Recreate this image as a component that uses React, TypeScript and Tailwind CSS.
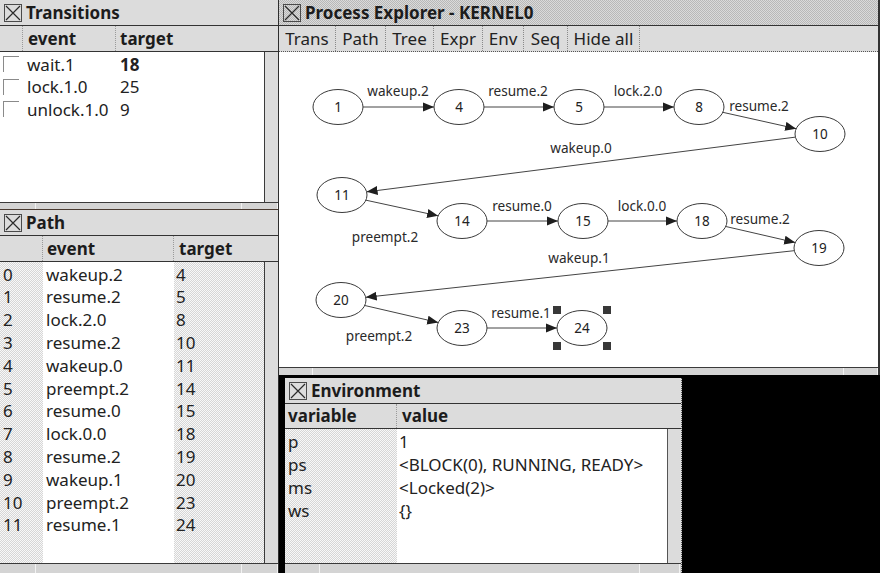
import React from "react";

const stipple =
  "bg-[image:repeating-conic-gradient(#d6d6d6_0_25%,#f8f8f8_0_50%)] bg-[length:2px_2px]";
const stippleDark =
  "bg-[image:repeating-conic-gradient(#b8b8b8_0_25%,#dadada_0_50%)] bg-[length:2px_2px]";

function CloseBox() {
  return (
    <svg width="18" height="18" viewBox="0 0 18 18" className="shrink-0">
      <rect x="0.5" y="0.5" width="17" height="17" fill="none" stroke="#4a4a4a" />
      <path d="M2 2 L16 16 M16 2 L2 16" stroke="#2a2a2a" strokeWidth="1.2" />
    </svg>
  );
}

function TitleBar({ title, dark }: { title: string; dark?: boolean }) {
  return (
    <div
      className={`h-[26px] shrink-0 flex items-center gap-[4px] px-[4px] border-b border-[#333] ${
        dark ? stippleDark : "bg-[#dcdcdc]"
      }`}
    >
      <CloseBox />
      <span className="text-[17px] font-bold text-[#1c1c1c] leading-none">{title}</span>
    </div>
  );
}

function HScroll({ h, cuts }: { h: string; cuts: number[] }) {
  return (
    <div className={`${h} shrink-0 flex border-t border-[#3a3a3a] bg-[#d4d4d4]`}>
      {cuts.map((w, i) => (
        <div key={i} style={{ width: w }} className="h-full border-r border-[#f2f2f2]" />
      ))}
    </div>
  );
}

const transitions = [
  { event: "wait.1", target: "18", bold: true },
  { event: "lock.1.0", target: "25" },
  { event: "unlock.1.0", target: "9" },
];

const path = [
  ["wakeup.2", "4"],
  ["resume.2", "5"],
  ["lock.2.0", "8"],
  ["resume.2", "10"],
  ["wakeup.0", "11"],
  ["preempt.2", "14"],
  ["resume.0", "15"],
  ["lock.0.0", "18"],
  ["resume.2", "19"],
  ["wakeup.1", "20"],
  ["preempt.2", "23"],
  ["resume.1", "24"],
];

const env = [
  ["p", "1"],
  ["ps", "<BLOCK(0), RUNNING, READY>"],
  ["ms", "<Locked(2)>"],
  ["ws", "{}"],
];

function TransitionsPanel() {
  return (
    <div className="h-[210px] shrink-0 flex flex-col border-b border-[#4a3a30]">
      <TitleBar title="Transitions" />
      <div className="h-[26px] shrink-0 flex bg-[#dcdcdc] border-b border-[#333] text-[17px] font-bold text-[#1c1c1c]">
        <div className="w-[23px] border-r border-dotted border-[#9a9a9a]" />
        <div className="w-[93px] pl-[5px] flex items-center border-r border-dotted border-[#9a9a9a]">event</div>
        <div className="flex-1 pl-[4px] flex items-center">target</div>
      </div>
      <div className="flex-1 flex min-h-0">
        <div className="flex-1 bg-white pt-[1px]">
          {transitions.map((t) => (
            <div key={t.event} className="h-[22.5px] flex items-center text-[17px] text-[#222]">
              <div className="w-[23px] pl-[3px]">
                <div className="w-[16px] h-[16px] border-t border-l border-[#8a8a8a]" />
              </div>
              <div className="w-[93px] pl-[4px]">{t.event}</div>
              <div className={`pl-[4px] ${t.bold ? "font-bold" : ""}`}>{t.target}</div>
            </div>
          ))}
        </div>
        <div className="w-[14px] bg-[#dcdcdc] border-l border-[#3a3a3a]" />
      </div>
      <HScroll h="h-[7px]" cuts={[36, 206, 36]} />
    </div>
  );
}

function PathPanel() {
  return (
    <div className="flex-1 flex flex-col min-h-0">
      <TitleBar title="Path" />
      <div className="h-[26px] shrink-0 flex bg-[#dcdcdc] border-b border-[#333] text-[17px] font-bold text-[#1c1c1c]">
        <div className="w-[43px] border-r border-dotted border-[#9a9a9a]" />
        <div className="w-[131px] pl-[4px] flex items-center border-r border-dotted border-[#9a9a9a]">event</div>
        <div className="flex-1 pl-[5px] flex items-center">target</div>
      </div>
      <div className="flex-1 flex min-h-0">
        <div className="flex-1 flex text-[17px] text-[#222]">
          <div className={`w-[43px] ${stipple} pt-[1px]`}>
            {path.map((_, i) => (
              <div key={i} className="h-[22.8px] flex items-center pl-[3px]">{i}</div>
            ))}
          </div>
          <div className="w-[131px] bg-white pt-[1px]">
            {path.map(([e], i) => (
              <div key={i} className="h-[22.8px] flex items-center pl-[3px]">{e}</div>
            ))}
          </div>
          <div className={`flex-1 ${stipple} pt-[1px]`}>
            {path.map(([, t], i) => (
              <div key={i} className="h-[22.8px] flex items-center pl-[2px]">{t}</div>
            ))}
          </div>
        </div>
        <div className="w-[14px] bg-[#dcdcdc] border-l border-[#3a3a3a]" />
      </div>
      <HScroll h="h-[10px]" cuts={[36, 206, 36]} />
    </div>
  );
}

const nodes: { id: string; x: number; y: number }[] = [
  { id: "1", x: 338, y: 107 },
  { id: "4", x: 459, y: 107 },
  { id: "5", x: 579, y: 107 },
  { id: "8", x: 699, y: 107 },
  { id: "10", x: 820, y: 134 },
  { id: "11", x: 342, y: 195 },
  { id: "14", x: 462, y: 221 },
  { id: "15", x: 583, y: 221 },
  { id: "18", x: 702, y: 221 },
  { id: "19", x: 819, y: 248 },
  { id: "20", x: 341, y: 300 },
  { id: "23", x: 462, y: 328 },
  { id: "24", x: 582, y: 328 },
];

const labels: { t: string; x: number; y: number }[] = [
  { t: "wakeup.2", x: 398, y: 96 },
  { t: "resume.2", x: 518, y: 96 },
  { t: "lock.2.0", x: 638, y: 96 },
  { t: "resume.2", x: 759, y: 111 },
  { t: "wakeup.0", x: 581, y: 153 },
  { t: "preempt.2", x: 385, y: 242 },
  { t: "resume.0", x: 522, y: 211 },
  { t: "lock.0.0", x: 642, y: 211 },
  { t: "resume.2", x: 760, y: 224 },
  { t: "wakeup.1", x: 579, y: 263 },
  { t: "preempt.2", x: 379, y: 341 },
  { t: "resume.1", x: 521, y: 318 },
];

const RX = 25;
const RY = 17.5;

function Graph() {
  const byId = Object.fromEntries(nodes.map((n) => [n.id, n]));
  const order = nodes.map((n) => n.id);
  const edges = order.slice(0, -1).map((id, i) => {
    const a = byId[id];
    const b = byId[order[i + 1]];
    const dx = b.x - a.x;
    const dy = b.y - a.y;
    const t = 1 / Math.sqrt((dx / RX) ** 2 + (dy / RY) ** 2);
    return { x1: a.x + dx * t, y1: a.y + dy * t, x2: b.x - dx * t, y2: b.y - dy * t };
  });
  return (
    <svg width="599" height="315" viewBox="279 52 599 315" className="block">
      <defs>
        <marker id="arr" markerUnits="userSpaceOnUse" markerWidth="12" markerHeight="10" refX="11" refY="5" orient="auto">
          <path d="M0 0.5 L11 5 L0 9.5 Z" fill="#1e1e1e" />
        </marker>
      </defs>
      {edges.map((e, i) => (
        <line key={i} x1={e.x1} y1={e.y1} x2={e.x2} y2={e.y2} stroke="#444" strokeWidth="1" markerEnd="url(#arr)" />
      ))}
      {nodes.map((n) => (
        <g key={n.id}>
          <ellipse cx={n.x} cy={n.y} rx={RX} ry={RY} fill="white" stroke="#3a3a3a" strokeWidth="1" />
          <text x={n.x} y={n.y + 4.5} textAnchor="middle" fontSize="13.5" fill="#222" fontFamily="Noto Sans, sans-serif">
            {n.id}
          </text>
        </g>
      ))}
      {labels.map((l, i) => (
        <text key={i} x={l.x} y={l.y} textAnchor="middle" fontSize="13.6" fill="#2a2a2a" fontFamily="Noto Sans, sans-serif">
          {l.t}
        </text>
      ))}
      {[
        [553, 306],
        [603, 306],
        [553, 342],
        [603, 342],
      ].map(([x, y], i) => (
        <rect key={i} x={x} y={y} width="8" height="8" fill="#383838" />
      ))}
    </svg>
  );
}

const buttons: [string, string][] = [
  ["Trans", "w-[57px]"],
  ["Path", "w-[50px]"],
  ["Tree", "w-[48px]"],
  ["Expr", "w-[49px]"],
  ["Env", "w-[41px]"],
  ["Seq", "w-[44px]"],
  ["Hide all", "w-[72px]"],
];

function ProcessExplorer() {
  return (
    <div className="h-[375px] shrink-0 flex flex-col border-r-2 border-[#333]">
      <TitleBar title="Process Explorer - KERNEL0" dark />
      <div className="h-[26px] shrink-0 flex bg-[#dcdcdc] border-b border-dotted border-[#555] text-[17px] text-[#222]">
        {buttons.map(([b, w]) => (
          <div key={b} className={`${w} flex items-center justify-center border-r border-dotted border-[#8a8a8a]`}>
            {b}
          </div>
        ))}
      </div>
      <div className="flex-1 bg-white min-h-0 overflow-hidden">
        <Graph />
      </div>
      <HScroll h="h-[8px]" cuts={[34, 531, 34]} />
    </div>
  );
}

function Environment() {
  return (
    <div className="w-[397px] h-full flex flex-col bg-[#dcdcdc] border-r border-dotted border-[#555]">
      <TitleBar title="Environment" />
      <div className="h-[25px] shrink-0 flex bg-[#dcdcdc] border-b border-[#333] text-[17px] font-bold text-[#1c1c1c]">
        <div className="w-[112px] pl-[3px] flex items-center border-r border-dotted border-[#9a9a9a]">variable</div>
        <div className="flex-1 pl-[5px] flex items-center">value</div>
      </div>
      <div className="flex-1 flex min-h-0 text-[17px] text-[#222]">
        <div className={`w-[112px] ${stipple} pt-[1px]`}>
          {env.map(([v]) => (
            <div key={v} className="h-[23px] flex items-center pl-[3px]">{v}</div>
          ))}
        </div>
        <div className="flex-1 bg-white pt-[1px]">
          {env.map(([v, val]) => (
            <div key={v} className="h-[23px] flex items-center pl-[2px]">{val}</div>
          ))}
        </div>
        <div className="w-[14px] bg-[#dcdcdc] border-l border-[#555]" />
      </div>
      <HScroll h="h-[10px]" cuts={[35, 320, 40]} />
    </div>
  );
}

export default function App() {
  return (
    <div className="w-[880px] h-[573px] flex overflow-hidden bg-black font-['Noto_Sans',sans-serif]">
      <div className="w-[279px] h-full shrink-0 flex flex-col bg-[#dcdcdc] border-r border-[#2e2e2e]">
        <TransitionsPanel />
        <PathPanel />
      </div>
      <div className="flex-1 h-full flex flex-col">
        <ProcessExplorer />
        <div className="flex-1 min-h-0 pt-[3px] pl-[6px] bg-black">
          <Environment />
        </div>
      </div>
    </div>
  );
}
